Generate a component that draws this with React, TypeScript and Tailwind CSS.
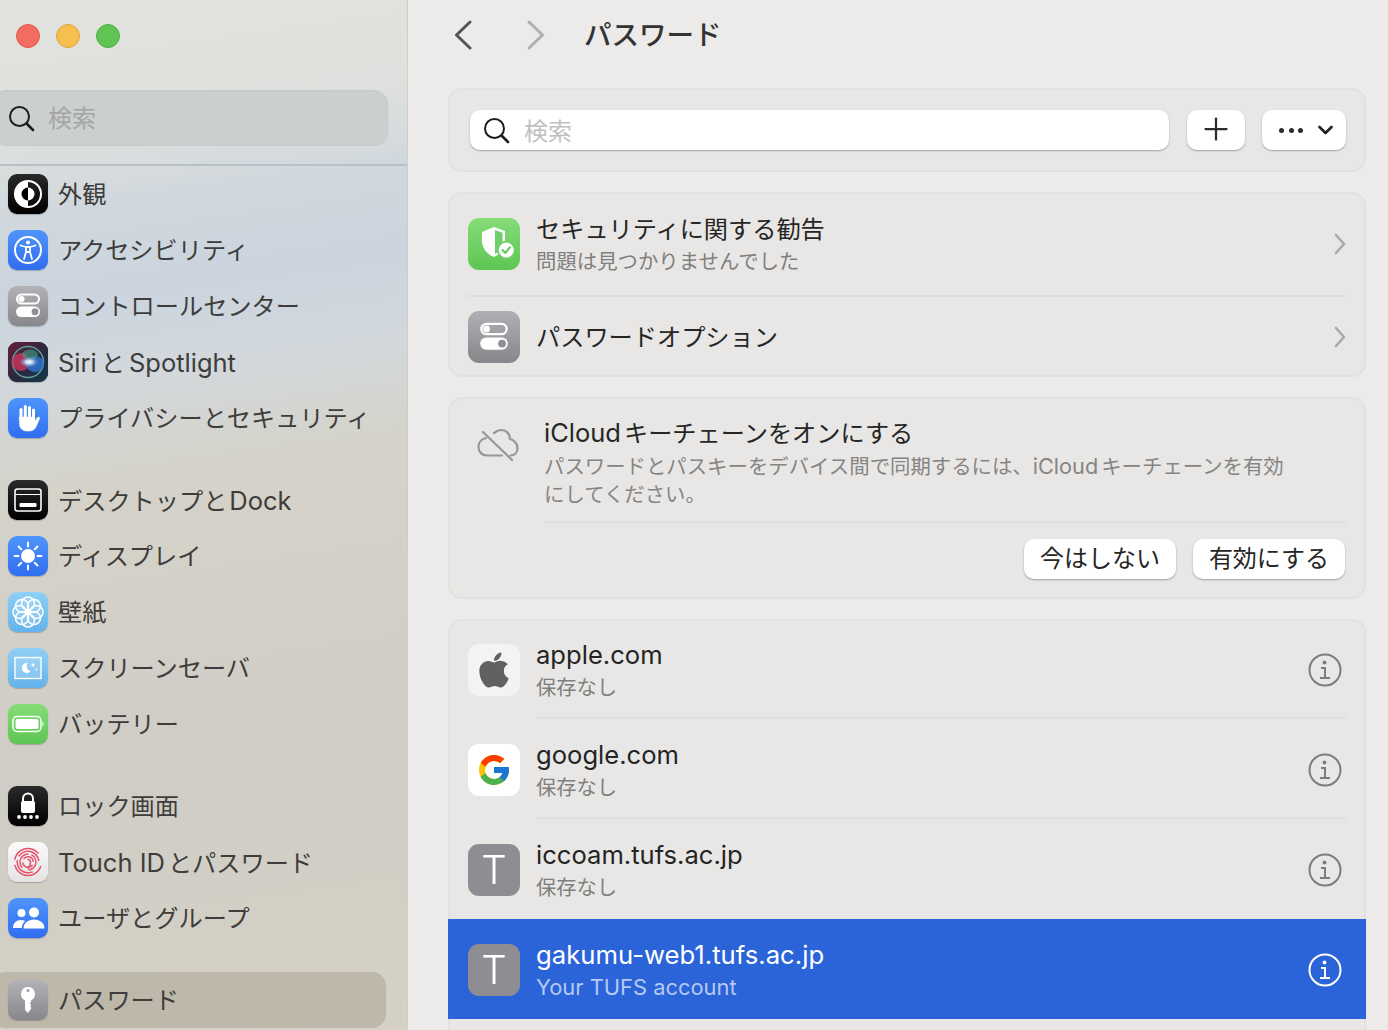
import { ReactNode } from "react";
import { Plus } from "lucide-react";
import { FaApple } from "react-icons/fa";
import { FcGoogle } from "react-icons/fc";

// Rounded app icon tile
function Tile({ className, children }: { className: string; children?: ReactNode }) {
  return (
    <div className={`flex h-10 w-10 shrink-0 items-center justify-center overflow-hidden rounded-[9px] shadow-[0_1px_1px_rgba(0,0,0,0.22)] ${className}`}>
      {children}
    </div>
  );
}

const BLUE = "bg-[linear-gradient(180deg,#4f94fb,#2f6ef0)]";
const BLACK = "bg-[linear-gradient(180deg,#2a2a2a,#000000)]";
const GRAY = "bg-[linear-gradient(180deg,#b3b2b6,#87868b)]";
const SKY = "bg-[linear-gradient(180deg,#8fd0f5,#63b2ec)]";

function SearchGlass() {
  return (
    <svg width="27" height="27" viewBox="0 0 27 27" fill="none" stroke="#1d1d1d" strokeLinecap="round" className="shrink-0">
      <circle cx="11.5" cy="11.5" r="9.5" strokeWidth="2" />
      <path d="M18.5 18.5 25 25" strokeWidth="2.6" />
    </svg>
  );
}

function Toggles({ size = 40 }: { size?: number }) {
  return (
    <svg width={size} height={size} viewBox="0 0 40 40">
      <rect x="9" y="8.5" width="22" height="9" rx="4.5" fill="none" stroke="#fff" strokeWidth="2" />
      <circle cx="13.5" cy="13" r="3" fill="#fff" />
      <rect x="8" y="20.5" width="24" height="10.5" rx="5.25" fill="#fff" />
      <circle cx="27" cy="25.75" r="3.4" fill="#8f8e93" />
    </svg>
  );
}

function AppearanceIcon() {
  return (
    <svg width="40" height="40" viewBox="0 0 40 40">
      <circle cx="20" cy="20" r="13" fill="none" stroke="#fff" strokeWidth="2" />
      <path d="M20 7a13 13 0 0 0 0 26z" fill="#fff" />
      <path d="M20 13.5a6.5 6.5 0 0 0 0 13z" fill="#000" />
      <path d="M20 13.5a6.5 6.5 0 0 1 0 13z" fill="#fff" />
    </svg>
  );
}

function AccessibilityIcon() {
  return (
    <svg width="40" height="40" viewBox="0 0 40 40" fill="none" stroke="#fff">
      <circle cx="20" cy="20" r="13" strokeWidth="2" />
      <circle cx="20" cy="12.5" r="2" fill="#fff" stroke="none" />
      <path d="M12.5 15.5 18 17v5l-2 7M27.5 15.5 22 17v5l2 7M18 17h4M18 22h4" strokeWidth="1.8" strokeLinecap="round" strokeLinejoin="round" />
    </svg>
  );
}

function SiriIcon() {
  return (
    <svg width="40" height="40" viewBox="0 0 40 40">
      <defs>
        <linearGradient id="siriBg" x1="0" y1="0" x2="1" y2="1">
          <stop offset="0%" stopColor="#6b1c3e" />
          <stop offset="55%" stopColor="#28293f" />
          <stop offset="100%" stopColor="#0f3a4a" />
        </linearGradient>
        <radialGradient id="siriCore" cx="50%" cy="50%" r="50%">
          <stop offset="0%" stopColor="#ffffff" />
          <stop offset="35%" stopColor="#c4d8f4" />
          <stop offset="100%" stopColor="#5b7fb0" stopOpacity="0" />
        </radialGradient>
      </defs>
      <rect width="40" height="40" fill="url(#siriBg)" />
      <circle cx="20" cy="20" r="15.5" fill="none" stroke="#5fa09c" strokeWidth="1.4" />
      <ellipse cx="13" cy="20" rx="9" ry="9" fill="#d8365f" opacity="0.75" />
      <ellipse cx="27" cy="22" rx="9" ry="8" fill="#3276d8" opacity="0.8" />
      <ellipse cx="22" cy="12.5" rx="8" ry="5" fill="#3ca58a" opacity="0.6" />
      <ellipse cx="21" cy="20" rx="10" ry="5.5" fill="url(#siriCore)" />
    </svg>
  );
}

function HandIcon() {
  return (
    <svg width="40" height="40" viewBox="0 0 40 40" fill="#fff" stroke="#fff" strokeLinecap="round">
      <path d="M13 21V11.5M17.3 19V8.500M21.500 19V9.500M25.500 21V12" strokeWidth="3" fill="none" />
      <path d="M11.500 19h15.500v4l2.500-3.500c1-1.300 2.800-.2 2.100 1.200L28 29c-1.300 2.500-3.500 4-6.500 4h-3c-4 0-7-3-7-7z" strokeWidth="0.500" />
    </svg>
  );
}

function DesktopIcon() {
  return (
    <svg width="40" height="40" viewBox="0 0 40 40">
      <rect x="7" y="9" width="26" height="22" rx="2.5" fill="none" stroke="#fff" strokeWidth="1.6" />
      <path d="M7.5 14.5h25" stroke="#fff" strokeWidth="1" />
      <rect x="11.5" y="23" width="17" height="4" rx="1" fill="#fff" />
    </svg>
  );
}

function SunIcon() {
  const rays = [0, 45, 90, 135, 180, 225, 270, 315];
  return (
    <svg width="40" height="40" viewBox="0 0 40 40">
      <circle cx="20" cy="20" r="7" fill="#fff" />
      {rays.map((r) => (
        <path key={r} d="M20 6.500v4" stroke="#fff" strokeWidth="1.900" strokeLinecap="round" transform={`rotate(${r} 20 20)`} />
      ))}
    </svg>
  );
}

function FlowerIcon() {
  const petals = [0, 45, 90, 135, 180, 225, 270, 315];
  return (
    <svg width="40" height="40" viewBox="0 0 40 40" fill="none" stroke="#fff" strokeWidth="1.500">
      {petals.map((r) => (
        <circle key={r} cx="20" cy="11.500" r="6.500" fill="rgba(255,255,255,0.1)" transform={`rotate(${r} 20 20)`} />
      ))}
      <circle cx="20" cy="20" r="2.600" fill="#fff" stroke="none" />
    </svg>
  );
}

function ScreenSaverIcon() {
  return (
    <svg width="40" height="40" viewBox="0 0 40 40">
      <rect x="7" y="9.500" width="26" height="21" fill="rgba(255,255,255,0.18)" stroke="#fff" strokeWidth="1.400" />
      <path d="M19.500 15a5 5 0 1 0 3 8.400 5.500 5.500 0 0 1-3-8.400z" fill="#fff" />
      <path d="M25 14.500l.7 1.800 1.800.7-1.800.7-.7 1.800-.7-1.800-1.800-.7 1.800-.7zM28.500 20l.5 1 1 .5-1 .5-.5 1-.5-1-1-.5 1-.5z" fill="#fff" />
    </svg>
  );
}

function BatteryIcon() {
  return (
    <svg width="40" height="40" viewBox="0 0 40 40">
      <rect x="5" y="12.500" width="28" height="15" rx="4" fill="none" stroke="#fff" strokeWidth="1.500" />
      <rect x="7.500" y="15" width="23" height="10" rx="2" fill="#fff" />
      <path d="M34.500 17.500c1.400.6 1.400 4.400 0 5z" fill="#fff" />
    </svg>
  );
}

function LockIcon() {
  return (
    <svg width="40" height="40" viewBox="0 0 40 40">
      <path d="M15 16v-3.500a5 5 0 0 1 10 0V16" fill="none" stroke="#fff" strokeWidth="2" />
      <rect x="13" y="15" width="14" height="12" rx="2" fill="#fff" />
      <circle cx="11" cy="31" r="1.900" fill="#fff" />
      <circle cx="17" cy="31" r="1.900" fill="#fff" />
      <circle cx="23" cy="31" r="1.900" fill="#fff" />
      <circle cx="29" cy="31" r="1.900" fill="#fff" />
    </svg>
  );
}

function FingerprintIcon() {
  return (
    <svg width="40" height="40" viewBox="0 0 40 40" fill="none" stroke="#e9506a" strokeWidth="1.500" strokeLinecap="round">
      <circle cx="20" cy="20" r="13.500" strokeDasharray="34 6 30 15" transform="rotate(20 20 20)" />
      <circle cx="20" cy="20" r="10.800" strokeDasharray="22 5 26 14" transform="rotate(70 20 20)" />
      <circle cx="20" cy="20" r="8" strokeDasharray="18 4 20 8" transform="rotate(140 20 20)" />
      <circle cx="20" cy="20" r="5.300" strokeDasharray="12 4 12 5" transform="rotate(220 20 20)" />
      <path d="M20 17.500c1.500 0 2.500 1 2.500 3 0 2-1 4-2.500 6" />
    </svg>
  );
}

function UsersIcon() {
  return (
    <svg width="40" height="40" viewBox="0 0 40 40" fill="#fff">
      <circle cx="13.500" cy="15" r="4" />
      <circle cx="26" cy="14.500" r="5" />
      <path d="M5 30c0-5 3.500-8 8-8 1.600 0 3 .4 4.200 1.100-2 1.600-3.200 4-3.400 6.900z" />
      <path d="M15.500 30.500c0-5.500 4.500-9 10.500-9s10.500 3.500 10.500 9z" />
    </svg>
  );
}

function KeyIcon() {
  return (
    <svg width="40" height="40" viewBox="0 0 40 40">
      <path d="M20 7a7 7 0 0 1 3 13.300V22l-1.500 1.500L23.500 25 22 26.500l1.500 1.500L20 33l-3-3V20.300A7 7 0 0 1 20 7z" fill="#fff" />
      <circle cx="20" cy="10.500" r="1.500" fill="#a09fa4" />
    </svg>
  );
}

function ShieldIcon() {
  return (
    <svg width="52" height="52" viewBox="0 0 52 52">
      <path d="M14 14 26 9l11 4v13c0 6-5 10-11 13-7-3-12-8-12-17z" fill="#fff" />
      <path d="M27 12l7.500 2.800V30L27 36z" fill="#6fd06a" />
      <circle cx="38.300" cy="32" r="8.500" fill="#fff" stroke="#6fd06a" strokeWidth="2" />
      <path d="M34.500 32l2.800 3 4.500-5.500" fill="none" stroke="#62c95f" strokeWidth="2" strokeLinecap="round" strokeLinejoin="round" />
    </svg>
  );
}

function CloudOffIcon() {
  return (
    <svg width="42" height="36" viewBox="0 0 42 36" fill="none" stroke="#97969b" strokeWidth="2.200" strokeLinecap="round" strokeLinejoin="round" className="shrink-0">
      <path d="M9 11C4 12 1.500 16 1.500 20c0 5 3.500 8.500 8.500 8.500h15" />
      <path d="M17 6c2-1.500 4.500-3 7-3 5.500 0 9 4 9 9 4 1 7.500 4.500 7.500 9s-3 7.500-7 7.500" />
      <path d="M6 5 35 33" />
    </svg>
  );
}

function InfoIcon({ className }: { className: string }) {
  return (
    <svg width="34" height="34" viewBox="0 0 34 34" fill="none" stroke="currentColor" strokeWidth="2" className={`shrink-0 ${className}`}>
      <circle cx="17" cy="17" r="15.500" />
      <circle cx="16.500" cy="9.500" r="1.900" fill="currentColor" stroke="none" />
      <path d="M13 15h4v10M12 25h10" />
    </svg>
  );
}

function Chevron({ back, className }: { back?: boolean; className: string }) {
  return (
    <svg width="18" height="30" viewBox="0 0 18 30" fill="none" stroke="currentColor" strokeWidth="3" strokeLinecap="round" strokeLinejoin="round" className={`shrink-0 ${className}`}>
      <path d={back ? "M16 2 2.500 15 16 28" : "M2 2l13.500 13L2 28"} />
    </svg>
  );
}

function RowChevron() {
  return (
    <svg width="12" height="22" viewBox="0 0 12 22" fill="none" stroke="#a9a9a9" strokeWidth="2.600" strokeLinecap="round" strokeLinejoin="round" className="shrink-0">
      <path d="M2 2l8 9-8 9" />
    </svg>
  );
}

// Latin words run a little larger than the kana beside them
function Lat({ className, children }: { className: string; children: ReactNode }) {
  return <span className={className}>{children}</span>;
}

const side = "text-[25.5px]";

type Row = { key: string; label: ReactNode; icon: ReactNode };

const groups: Row[][] = [
  [
    { key: "appearance", label: "外観", icon: <Tile className={BLACK}><AppearanceIcon /></Tile> },
    { key: "access", label: "アクセシビリティ", icon: <Tile className={BLUE}><AccessibilityIcon /></Tile> },
    { key: "control", label: "コントロールセンター", icon: <Tile className={GRAY}><Toggles /></Tile> },
    { key: "siri", label: <><Lat className={`${side} mr-1`}>Siri</Lat>と<Lat className={`${side} ml-1`}>Spotlight</Lat></>, icon: <Tile className="bg-[#2a1b2c]"><SiriIcon /></Tile> },
    { key: "privacy", label: "プライバシーとセキュリティ", icon: <Tile className={BLUE}><HandIcon /></Tile> },
  ],
  [
    { key: "desktop", label: <>デスクトップと<Lat className={`${side} ml-0.5`}>Dock</Lat></>, icon: <Tile className={BLACK}><DesktopIcon /></Tile> },
    { key: "display", label: "ディスプレイ", icon: <Tile className={BLUE}><SunIcon /></Tile> },
    { key: "wallpaper", label: "壁紙", icon: <Tile className={SKY}><FlowerIcon /></Tile> },
    { key: "saver", label: "スクリーンセーバ", icon: <Tile className={SKY}><ScreenSaverIcon /></Tile> },
    { key: "battery", label: "バッテリー", icon: <Tile className="bg-[linear-gradient(180deg,#86dc78,#5cc653)]"><BatteryIcon /></Tile> },
  ],
  [
    { key: "lock", label: "ロック画面", icon: <Tile className={BLACK}><LockIcon /></Tile> },
    { key: "touch", label: <><Lat className={`${side} mr-[3px]`}>Touch ID</Lat>とパスワード</>, icon: <Tile className="bg-[linear-gradient(180deg,#fafafa,#e4e4e4)]"><FingerprintIcon /></Tile> },
    { key: "users", label: "ユーザとグループ", icon: <Tile className={BLUE}><UsersIcon /></Tile> },
  ],
];

function SidebarRow({ row }: { row: Row }) {
  return (
    <div className="flex h-14 items-center gap-2.5 pl-2">
      {row.icon}
      <span className="whitespace-nowrap pt-[2px] text-[24.2px] leading-none text-[#3e3d3b]">{row.label}</span>
    </div>
  );
}

function Sidebar() {
  return (
    <aside className="flex h-full w-[408px] shrink-0 flex-col border-r border-[#cfcdc8] bg-[linear-gradient(172deg,#e2e2df_0%,#e0e1de_12%,#d1d8dd_20%,#cbd4df_28%,#d2d8dc_36%,#d5d3c9_46%,#cfcdc6_72%,#d5d1c5_100%)]">
      {/* Traffic lights */}
      <div className="mt-6 flex gap-4 pl-4">
        <span className="h-6 w-6 rounded-full border border-[#dc5a50] bg-[#f26d60]" />
        <span className="h-6 w-6 rounded-full border border-[#dea540] bg-[#f6bf4f]" />
        <span className="h-6 w-6 rounded-full border border-[#52ad47] bg-[#5fc454]" />
      </div>

      {/* Search */}
      <div className="-ml-2 mt-[42px] flex h-14 w-[396px] items-center gap-[13px] rounded-[14px] border border-[#c6c9c9] bg-[#cbcfcf] pl-[15px]">
        <SearchGlass />
        <span className="pt-[2px] text-[24px] leading-none text-[#a3a5a5]">検索</span>
      </div>
      <div className="mt-[18px] h-0.5 shrink-0 bg-[#b9c0c8]" />

      {groups.map((group, i) => (
        <div key={i} className="mb-[26px]">
          {group.map((row) => (
            <SidebarRow key={row.key} row={row} />
          ))}
        </div>
      ))}

      {/* Selected row */}
      <div className="-ml-2 flex h-14 w-[394px] items-center gap-2.5 rounded-[14px] bg-[#bdb8aa] pl-4">
        <Tile className={GRAY}><KeyIcon /></Tile>
        <span className="pt-[2px] text-[24.2px] leading-none text-[#3e3d3b]">パスワード</span>
      </div>
    </aside>
  );
}

function Card({ className = "", children }: { className?: string; children: ReactNode }) {
  return <section className={`rounded-[14px] border-2 border-[#e2e1df] bg-[#e8e7e5] ${className}`}>{children}</section>;
}

function ToolButton({ className, children }: { className: string; children: ReactNode }) {
  return (
    <div className={`flex h-10 shrink-0 items-center justify-center rounded-[10px] bg-white shadow-[0_1px_2px_rgba(0,0,0,0.3)] ${className}`}>
      {children}
    </div>
  );
}

function SettingRow({ icon, title, sub }: { icon: ReactNode; title: string; sub?: string }) {
  return (
    <div className="flex flex-1 items-center gap-4 pr-[18px]">
      {icon}
      <div className="min-w-0 flex-1 pt-[2px]">
        <div className="text-[24.2px] leading-[32px] text-[#262625]">{title}</div>
        {sub && <div className="mt-px text-[20.4px] leading-[30px] text-[#807f7e]">{sub}</div>}
      </div>
      <RowChevron />
    </div>
  );
}

type Site = { host: string; sub: string; icon: ReactNode };

const sites: Site[] = [
  { host: "apple.com", sub: "保存なし", icon: <FaApple className="h-[40px] w-[40px] text-[#616161]" /> },
  { host: "google.com", sub: "保存なし", icon: <FcGoogle className="h-[36px] w-[36px]" /> },
  { host: "iccoam.tufs.ac.jp", sub: "保存なし", icon: "T" },
];

function SiteIcon({ site, className }: { site: Site; className: string }) {
  const letter = site.icon === "T";
  const bg = letter ? "bg-[#8e8d92] text-white" : site.host === "google.com" ? "bg-white" : "bg-[#f3f3f3]";
  return (
    <div className={`flex h-[52px] w-[52px] shrink-0 items-center justify-center rounded-[11px] text-[40px] font-light ${bg} ${className}`}>
      {site.icon}
    </div>
  );
}

export default function App() {
  return (
    <div className="flex h-screen w-screen overflow-hidden bg-[#ecebe9] font-['Inter','Noto_Sans_CJK_JP',sans-serif]">
      <Sidebar />
      <main className="min-w-0 flex-1 pl-10 pr-[22px]">
        {/* Toolbar */}
        <header className="mb-[18px] flex h-[70px] items-center">
          <Chevron back className="ml-[6px] text-[#555555]" />
          <Chevron className="ml-[55px] text-[#b0b0b0]" />
          <h1 className="ml-[39px] text-[27.5px] font-medium leading-[40px] text-[#333]">パスワード</h1>
        </header>

        <div className="flex flex-col gap-5">
          {/* Search bar */}
          <Card className="flex h-[84px] items-center gap-[17px] pl-5 pr-[18px]">
            <div className="mr-px flex h-10 flex-1 items-center gap-[14px] rounded-[10px] bg-white pl-[13px] shadow-[0_1px_2px_rgba(0,0,0,0.3)]">
              <SearchGlass />
              <span className="pt-[4px] text-[24px] leading-none text-[#c0c0c0]">検索</span>
            </div>
            <ToolButton className="w-[58px]">
              <Plus className="mb-[2px] h-9 w-9 text-[#2b2b2b]" strokeWidth={1.5} />
            </ToolButton>
            <ToolButton className="w-[84px] gap-[15px] pl-1">
              <span className="flex gap-[4.500px]">
                <span className="h-[5px] w-[5px] rounded-full bg-[#2b2b2b]" />
                <span className="h-[5px] w-[5px] rounded-full bg-[#2b2b2b]" />
                <span className="h-[5px] w-[5px] rounded-full bg-[#2b2b2b]" />
              </span>
              <svg width="15" height="10" viewBox="0 0 15 10" fill="none" stroke="#222" strokeWidth="2.600" strokeLinecap="round" strokeLinejoin="round">
                <path d="M1.500 2l6 6 6-6" />
              </svg>
            </ToolButton>
          </Card>

          {/* Security + options */}
          <Card className="flex h-[185px] flex-col pl-[18px]">
            <div className="flex h-[101px] shrink-0 pb-px">
              <SettingRow
                icon={<div className="h-[52px] w-[52px] shrink-0 overflow-hidden rounded-[11px] bg-[linear-gradient(180deg,#86dc78,#5cc653)]"><ShieldIcon /></div>}
                title="セキュリティに関する勧告"
                sub="問題は見つかりませんでした"
              />
            </div>
            <div className="mr-[18px] h-0.5 shrink-0 bg-[#dfdedc]" />
            <div className="flex h-[78px] shrink-0 pt-[2px]">
              <SettingRow
                icon={<div className="flex h-[52px] w-[52px] shrink-0 items-center justify-center rounded-[11px] bg-[linear-gradient(180deg,#b0afb3,#87868b)]"><Toggles size={46} /></div>}
                title="パスワードオプション"
              />
            </div>
          </Card>

          {/* iCloud keychain */}
          <Card className="flex h-[202px] gap-[25px] pl-[27px] pr-[18px] pt-[18px]">
            <div className="pt-[10px]"><CloudOffIcon /></div>
            <div className="flex-1">
              <div className="text-[24.2px] leading-[32px] text-[#262625]">
                <Lat className="mr-[3px] text-[25.5px]">iCloud</Lat>キーチェーンをオンにする
              </div>
              <p className="mt-[2px] text-[20.4px] leading-[28px] text-[#868584]">
                パスワードとパスキーをデバイス間で同期するには、<Lat className="mr-[3px] text-[21.7px]">iCloud</Lat>キーチェーンを有効
                <br />
                にしてください。
              </p>
              <div className="mt-[12px] h-0.5 bg-[#dfdedc]" />
              <div className="mt-4 flex justify-end gap-[17px] pr-px">
                <ToolButton className="w-[152px] text-[24px] text-[#262625]">今はしない</ToolButton>
                <ToolButton className="w-[152px] text-[24px] text-[#262625]">有効にする</ToolButton>
              </div>
            </div>
          </Card>

          {/* Saved passwords */}
          <Card>
            {sites.map((site, i) => (
              <div key={site.host} className={`flex items-start gap-4 pl-[18px] pr-[18px] ${i === 0 ? "h-[98px]" : "h-[100px]"}`}>
                <SiteIcon site={site} className={i === 0 ? "mt-[23px]" : "mt-[25px]"} />
                <div className={`flex h-full flex-1 items-start ${i === 0 ? "pt-[18px]" : "pt-5"} ${i < 2 ? "border-b-2 border-[#dfdedc]" : ""}`}>
                  <div className="flex-1">
                    <div className="text-[25.6px] leading-[32px] text-[#242423]">{site.host}</div>
                    <div className="mt-[2px] text-[20.3px] leading-[30px] text-[#807f7e]">{site.sub}</div>
                  </div>
                  <InfoIcon className="mr-[4px] mt-[14px] text-[#7c7c7c]" />
                </div>
              </div>
            ))}
            {/* Selected login runs over the card's side borders */}
            <div className="-mx-0.5 flex h-[100px] items-start gap-4 bg-[#2b63d9] pl-5 pr-5">
              <div className="mt-[25px] flex h-[52px] w-[52px] shrink-0 items-center justify-center rounded-[11px] bg-[#8e8d92] text-[40px] font-light text-white">T</div>
              <div className="flex flex-1 items-start pt-5">
                <div className="flex-1">
                  <div className="text-[25.7px] leading-[32px] text-white">gakumu-web1.tufs.ac.jp</div>
                  <div className="mt-px text-[21.9px] leading-[30px] text-[#b5c9f2]">Your TUFS account</div>
                </div>
                <InfoIcon className="mr-[4px] mt-[14px] text-white" />
              </div>
            </div>
            <div className="h-6" />
          </Card>
        </div>
      </main>
    </div>
  );
}
